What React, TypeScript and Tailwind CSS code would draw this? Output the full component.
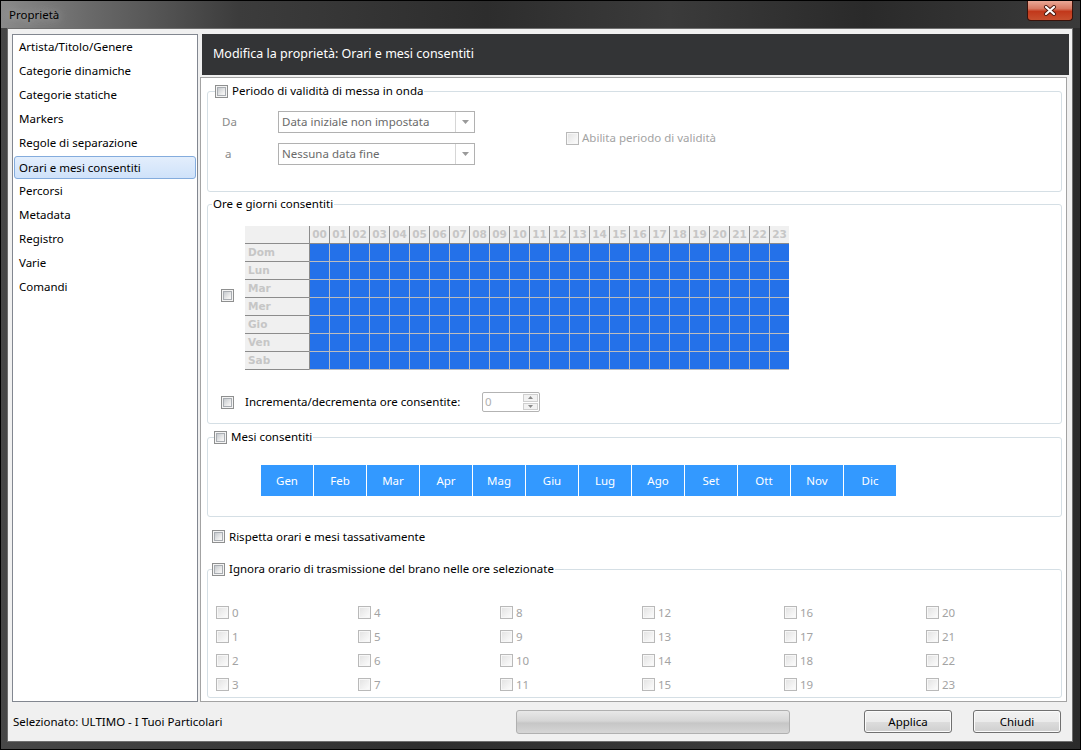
import React from "react";

const Check = ({ disabled = false }: { disabled?: boolean }) =>
  disabled ? (
    <div className="w-[13px] h-[13px] shrink-0 border border-[#b9b9b9] bg-[#f7f7f7] p-[1px]">
      <div className="w-full h-full bg-[linear-gradient(135deg,#e4e4e4,#fbfbfb)]" />
    </div>
  ) : (
    <div className="w-[13px] h-[13px] shrink-0 border border-[#8e8f8f] bg-[#f4f4f4] p-[1px]">
      <div className="w-full h-full border border-[#a9adb2] bg-[linear-gradient(135deg,#c6cace,#eeeeee_70%,#f8f8f8)]" />
    </div>
  );

const Arrow = () => (
  <svg width="7" height="4" viewBox="0 0 7 4">
    <path d="M0 0 L7 0 L3.5 4 Z" fill="#9a9a9a" />
  </svg>
);

const Combo = ({ text }: { text: string }) => (
  <div className="w-[197px] h-[22px] border border-[#b1b1b1] bg-white flex">
    <div className="flex-1 flex items-center pl-[3px] text-[#6a6a6a] leading-none">{text}</div>
    <div className="w-[19px] border-l border-[#d6d6d6] flex items-center justify-center">
      <Arrow />
    </div>
  </div>
);

const hours = Array.from({ length: 24 }, (_, i) => String(i).padStart(2, "0"));
const days = ["Dom", "Lun", "Mar", "Mer", "Gio", "Ven", "Sab"];
const months = ["Gen", "Feb", "Mar", "Apr", "Mag", "Giu", "Lug", "Ago", "Set", "Ott", "Nov", "Dic"];
const menu = [
  "Artista/Titolo/Genere",
  "Categorie dinamiche",
  "Categorie statiche",
  "Markers",
  "Regole di separazione",
  "Orari e mesi consentiti",
  "Percorsi",
  "Metadata",
  "Registro",
  "Varie",
  "Comandi",
];

const Grid = () => (
  <div className="flex flex-col font-['DejaVu_Sans',sans-serif] font-bold text-[10.5px] text-[#c6c6c6] leading-none">
    <div className="flex">
      <div className="w-[64px] h-[18px] bg-[#f0f0f0] border-b border-[#8c8c8c]" />
      {hours.map((h) => (
        <div
          key={h}
          className="w-[20px] h-[18px] bg-[#f0f0f0] border-l border-b border-[#8c8c8c] flex items-center justify-center"
        >
          {h}
        </div>
      ))}
    </div>
    {days.map((d) => (
      <div key={d} className="flex">
        <div className="w-[64px] h-[18px] bg-[#f0f0f0] border-b border-[#8c8c8c] pl-[3px] flex items-center">{d}</div>
        {hours.map((h, i) => (
          <div
            key={h}
            className={
              i === 0
                ? "w-[20px] h-[18px] bg-[#2471e9] border-l border-b border-l-[#8c8c8c] border-b-[#bdbdbd]"
                : "w-[20px] h-[18px] bg-[#2471e9] border-l border-b border-[#bdbdbd]"
            }
          />
        ))}
      </div>
    ))}
  </div>
);

const Button = ({ label }: { label: string }) => (
  <div className="w-[88px] h-[23px] rounded-[3px] border border-[#707070] bg-[linear-gradient(#f2f2f2,#ebebeb_50%,#dddddd_51%,#cfcfcf)] flex items-center justify-center text-black shadow-[inset_0_0_0_1px_#fbfbfb]">
    {label}
  </div>
);

export default function App() {
  return (
    <div className="relative w-[1081px] h-[750px] overflow-hidden border border-black bg-[linear-gradient(90deg,#474747,#2e2e2e_40%,#3a3a3a_70%,#2b2b2b)] font-['Noto_Sans',sans-serif] text-[11.5px] text-black">
      {/* title bar */}
      <div className="h-[27px] flex items-center pl-[8px] bg-[linear-gradient(90deg,#8a8a8a,#6a6a6a_8%,#3c3c3c_22%,#2d2d2d_45%,#3b3b3b_62%,#2a2a2a_80%,#3a3a3a)]">
        <span className="text-black [text-shadow:0_0_8px_#bdbdbd]">Proprietà</span>
      </div>
      <div className="absolute top-0 right-[7px] w-[46px] h-[20px] rounded-b-[4px] border border-[#3a120a] border-t-0 bg-[linear-gradient(#e9a896,#d77a63_40%,#c2381b_55%,#c8502f)] flex items-center justify-center">
        <svg width="14" height="11" viewBox="0 0 14 11">
          <path d="M3 2 L11 9 M11 2 L3 9" stroke="#4a1a10" strokeWidth="4" strokeLinecap="round" />
          <path d="M3 2 L11 9 M11 2 L3 9" stroke="#ffffff" strokeWidth="2.2" strokeLinecap="round" />
        </svg>
      </div>

      {/* client */}
      <div className="ml-[6px] w-[1066px] h-[714px] border border-[#6e6e6e] bg-[#f0f0f0] flex flex-col">
        <div className="h-[673px] pt-[5px] pl-[4px] pr-[3px] flex">
          {/* list */}
          <div className="w-[186px] shrink-0 h-full border border-[#828790] bg-white flex flex-col px-[1px]">
            {menu.map((m) =>
              m === "Orari e mesi consentiti" ? (
                <div key={m} className="h-[24px] pt-[1px]">
                  <div className="h-[23px] rounded-[3px] border border-[#84acdd] bg-[linear-gradient(#e3eefc,#cfe2fa)] pl-[4px] flex items-center">
                    {m}
                  </div>
                </div>
              ) : (
                <div key={m} className="h-[24px] pl-[5px] flex items-center">
                  {m}
                </div>
              )
            )}
          </div>

          {/* right column */}
          <div className="ml-[2px] min-w-0 flex-1 flex flex-col">
            <div className="ml-[2px] h-[41px] bg-[#333436] text-white text-[12.5px] pl-[11px] flex items-center">
              Modifica la proprietà: Orari e mesi consentiti
            </div>
            <div className="mt-[2px] mr-[2px] flex-1 bg-white border border-[#a3a3a3] pl-[6px] pr-[4px] flex flex-col">
              {/* G1 */}
              <div className="relative mt-[13px] h-[101px] border border-[#d5dfe5] rounded-[3px]">
                <div className="absolute left-[7px] top-[-9px] h-[16px] pr-[1px] bg-white flex items-center gap-[4px]">
                  <Check />
                  <span>Periodo di validità di messa in onda</span>
                </div>
                <div className="pt-[19px] pl-[14px] flex items-center">
                  <div className="flex flex-col gap-[10px]">
                    <div className="flex items-center">
                      <div className="w-[56px] text-[#8a8a8a]">Da</div>
                      <Combo text="Data iniziale non impostata" />
                    </div>
                    <div className="flex items-center">
                      <div className="w-[56px] pl-[3px] text-[#8a8a8a]">a</div>
                      <Combo text="Nessuna data fine" />
                    </div>
                  </div>
                  <div className="ml-[91px] flex items-center gap-[3px] text-[#a3a3a3]">
                    <Check disabled />
                    <span>Abilita periodo di validità</span>
                  </div>
                </div>
              </div>

              {/* G2 */}
              <div className="relative mt-[12px] h-[220px] border border-[#d5dfe5] rounded-[3px]">
                <div className="absolute left-[4px] top-[-9px] h-[16px] px-[1px] bg-white flex items-center">
                  <span>Ore e giorni consentiti</span>
                </div>
                <div className="pt-[21px] pl-[13px] flex items-start">
                  <div className="mt-[63px]">
                    <Check />
                  </div>
                  <div className="ml-[11px]">
                    <Grid />
                  </div>
                </div>
                <div className="mt-[22px] pl-[13px] h-[20px] flex items-center">
                  <Check />
                  <div className="ml-[11px] w-[237px]">Incrementa/decrementa ore consentite:</div>
                  <div className="w-[58px] h-[20px] rounded-[2px] border border-[#b3b3b3] bg-white flex">
                    <div className="flex-1 flex items-center pl-[2px] text-[#b0b0b0]">0</div>
                    <div className="w-[16px] flex flex-col py-[1px] pr-[1px] gap-[1px]">
                      <div className="flex-1 border border-[#cfcfcf] bg-[#f2f2f2] flex items-center justify-center">
                        <svg width="5" height="3" viewBox="0 0 5 3">
                          <path d="M0 3 L5 3 L2.5 0 Z" fill="#8a8a8a" />
                        </svg>
                      </div>
                      <div className="flex-1 border border-[#cfcfcf] bg-[#f2f2f2] flex items-center justify-center">
                        <svg width="5" height="3" viewBox="0 0 5 3">
                          <path d="M0 0 L5 0 L2.5 3 Z" fill="#8a8a8a" />
                        </svg>
                      </div>
                    </div>
                  </div>
                </div>
              </div>

              {/* G3 */}
              <div className="relative mt-[13px] h-[80px] border border-[#d5dfe5] rounded-[3px]">
                <div className="absolute left-[6px] top-[-9px] h-[16px] pr-[1px] bg-white flex items-center gap-[4px]">
                  <Check />
                  <span>Mesi consentiti</span>
                </div>
                <div className="pt-[27px] pl-[53px] flex gap-[1px]">
                  {months.map((m) => (
                    <div key={m} className="w-[52px] h-[31px] bg-[#3399ff] text-white flex items-center justify-center">
                      {m}
                    </div>
                  ))}
                </div>
              </div>

              {/* Rispetta */}
              <div className="mt-[12px] h-[15px] pl-[5px] flex items-center gap-[4px]">
                <Check />
                <span>Rispetta orari e mesi tassativamente</span>
              </div>

              {/* G5 */}
              <div className="relative mt-[25px] h-[129px] border border-[#d5dfe5] rounded-[3px]">
                <div className="absolute left-[4px] top-[-9px] h-[16px] pr-[1px] bg-white flex items-center gap-[4px]">
                  <Check />
                  <span>Ignora orario di trasmissione del brano nelle ore selezionate</span>
                </div>
                <div className="pt-[36px] pl-[8px] grid grid-flow-col grid-rows-4 auto-cols-[142px] gap-y-[11px]">
                  {Array.from({ length: 24 }, (_, i) => (
                    <div key={i} className="h-[13px] flex items-center gap-[3px] text-[#a3a3a3]">
                      <Check disabled />
                      <span>{i}</span>
                    </div>
                  ))}
                </div>
              </div>
            </div>
          </div>
        </div>

        {/* bottom bar */}
        <div className="flex-1 flex items-center pl-[5px]">
          <div className="w-[503px] shrink-0">Selezionato: ULTIMO - I Tuoi Particolari</div>
          <div className="w-[274px] shrink-0 h-[24px] rounded-[3px] border border-[#b0b0b0] bg-[linear-gradient(#e8e8e8,#d6d6d6_45%,#c6c6c6_55%,#d6d6d6)]" />
          <div className="ml-[74px]">
            <Button label="Applica" />
          </div>
          <div className="ml-[21px]">
            <Button label="Chiudi" />
          </div>
        </div>
      </div>
    </div>
  );
}
